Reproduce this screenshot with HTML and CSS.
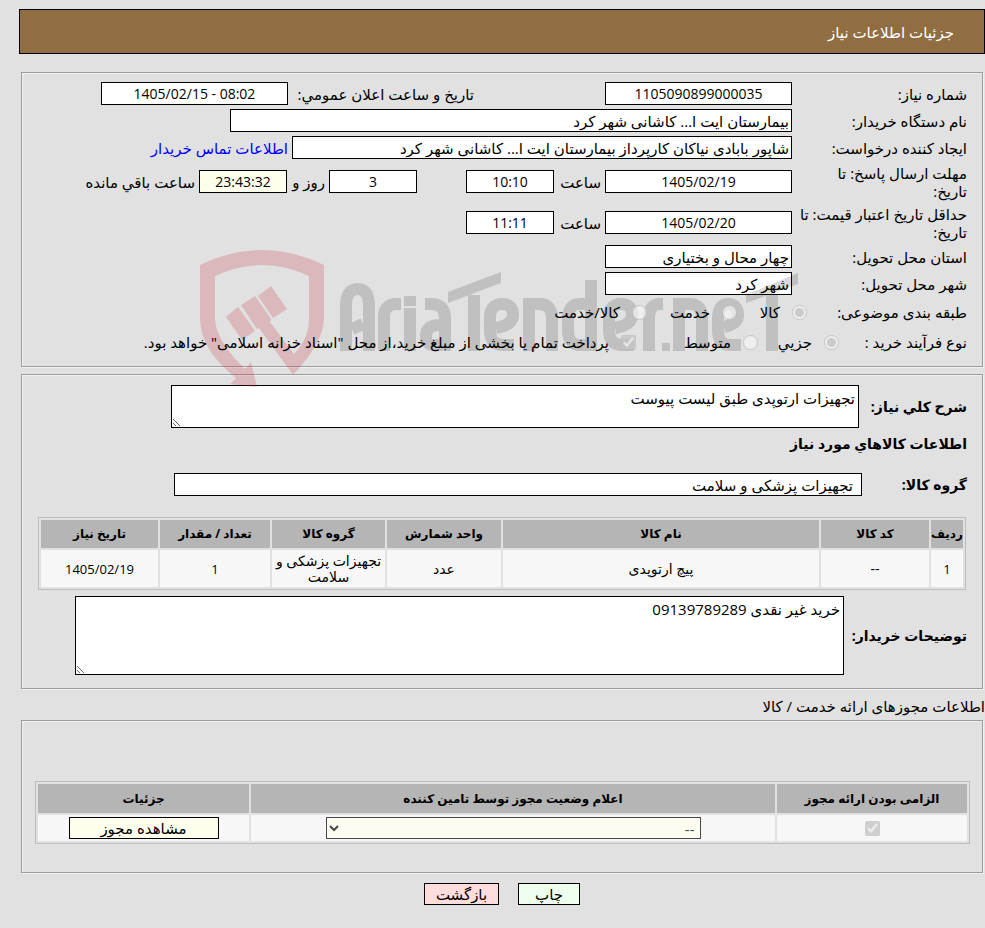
FILE: index.html
```html
<!DOCTYPE html>
<html lang="fa" dir="rtl">
<head>
    <meta charset="UTF-8">
    <meta name="viewport" content="width=device-width, initial-scale=1.0">
    <title>جزئیات اطلاعات نیاز</title>
    <link rel="stylesheet" href="styles.css">
</head>
<body>
    <header class="page-header">
        <h1>جزئیات اطلاعات نیاز</h1>
    </header>

    <main>
        <section class="panel need-info">
            <svg class="watermark" viewBox="0 0 600 140" aria-hidden="true">
                <g fill="#c8283c" fill-opacity="0.22">
                    <path d="M0 15 Q62 -15 124 15 V68 Q124 92 93 125 L59 78 L57 79 L41 55 L55 46 L71 69 L70 72 L94 104 Q109 88 109 70 V26 Q62 4 15 26 V70 Q17 92 45 119 L51 112 L57 137 L30 134 L36 128 Q0 100 0 68 Z"/>
                    <path d="M26 67 L38 57 L55 81 L42 90 Z M58 46 L71 36 L87 59 L73 68 Z"/>
                </g>
                <g fill="none" stroke="#000" stroke-width="12" opacity="0.14">
                    <path d="M146 101 V56 Q146 39 158 39 Q169 39 169 56 V101 M152 79 L163 74"/>
                    <path d="M184 101 V67 Q184 54 197 54 H201"/>
                    <path d="M210 56 V46 M210 58 V101"/>
                    <path d="M225 54 H231 Q245 54 245 68 V95 H234 Q226 95 226 86 Q226 75 240 75"/>
                    <path d="M274 45 V101"/>
                    <path d="M314 95 H303 Q290 95 290 80 V68 Q290 54 302 54 Q313 54 313 65 Q313 75 296 78"/>
                    <path d="M329 101 V54 H339 Q352 54 352 68 V101"/>
                    <path d="M391 30 V95 H380 Q368 95 368 80 V69 Q368 54 380 54 H385"/>
                    <path d="M434 95 H422 Q409 95 409 80 V68 Q409 54 421 54 Q432 54 432 65 Q432 75 415 78"/>
                    <path d="M449 101 V68 Q449 54 460 54 H463"/>
                    <path d="M479 101 V54 H490 Q502 54 502 68 V101"/>
                    <path d="M541 95 H530 Q518 95 518 80 V69 Q518 54 528 54 Q538 54 538 65 Q538 74 524 77"/>
                    <path d="M572 45 V101"/>
                    <path d="M248 42 L301 22 V33 L248 53 Z M546 45 L598 23 V34 L546 53 Z M462 93 H470 V101 H462 Z" fill="#000" stroke="none"/>
                </g>
            </svg>

            <div class="row">
                <label class="caption" for="need-no">شماره نیاز:</label>
                <input class="field medium number" id="need-no" type="text" value="1105090899000035" readonly>
                <label class="announce" for="announce-date">تاریخ و ساعت اعلان عمومي:</label>
                <input class="field medium number" id="announce-date" type="text" dir="ltr" value="1405/02/15 - 08:02" readonly>
            </div>
            <div class="row">
                <label class="caption" for="buyer-org">نام دستگاه خریدار:</label>
                <input class="field wide" id="buyer-org" type="text" value="بیمارستان ایت ا... کاشانی شهر کرد" readonly>
            </div>
            <div class="row">
                <label class="caption" for="requester">ایجاد کننده درخواست:</label>
                <input class="field long" id="requester" type="text" value="شاپور بابادی نیاکان کارپرداز بیمارستان ایت ا... کاشانی شهر کرد" readonly>
                <a href="#">اطلاعات تماس خریدار</a>
            </div>
            <div class="row tall">
                <label class="caption" for="reply-date">مهلت ارسال پاسخ: تا<br>تاریخ:</label>
                <input class="field medium number" id="reply-date" type="text" value="1405/02/19" readonly>
                <label class="hour" for="reply-time">ساعت</label>
                <input class="field small number" id="reply-time" type="text" value="10:10" readonly>
                <input class="field small number days" id="days" type="text" value="3" readonly>
                <label class="days-label" for="days">روز و</label>
                <input class="field small number highlight" id="remain" type="text" value="23:43:32" readonly>
                <label for="remain">ساعت باقي مانده</label>
            </div>
            <div class="row tall">
                <label class="caption" for="price-date">حداقل تاریخ اعتبار قیمت: تا<br>تاریخ:</label>
                <input class="field medium number" id="price-date" type="text" value="1405/02/20" readonly>
                <label class="hour" for="price-time">ساعت</label>
                <input class="field small number" id="price-time" type="text" value="11:11" readonly>
            </div>
            <div class="row">
                <label class="caption" for="province">استان محل تحویل:</label>
                <input class="field medium" id="province" type="text" value="چهار محال و بختیاری" readonly>
            </div>
            <div class="row">
                <label class="caption" for="city">شهر محل تحویل:</label>
                <input class="field medium" id="city" type="text" value="شهر کرد" readonly>
            </div>
            <div class="row choices">
                <span class="caption subject">طبقه بندی موضوعی:</span>
                <label class="choice goods"><input type="radio" name="subject" checked disabled>کالا</label>
                <label class="choice service"><input type="radio" name="subject" disabled>خدمت</label>
                <label class="choice"><input type="radio" name="subject" disabled>کالا/خدمت</label>
            </div>
            <div class="row choices">
                <span class="caption process">نوع فرآیند خرید :</span>
                <label class="choice minor"><input type="radio" name="process" checked disabled>جزیي</label>
                <label class="choice average"><input type="radio" name="process" disabled>متوسط</label>
                <label class="choice"><input type="checkbox" checked disabled>پرداخت تمام یا بخشی از مبلغ خرید،از محل "اسناد خزانه اسلامی" خواهد بود.</label>
            </div>
        </section>

        <section class="panel goods-info">
            <div class="line">
                <label class="bold description-label" for="description">شرح کلي نیاز:</label>
                <textarea class="field description" id="description" readonly>تجهیزات ارتوپدی طبق لیست پیوست</textarea>
            </div>
            <h2>اطلاعات کالاهاي مورد نیاز</h2>
            <div class="line">
                <label class="bold group-label" for="goods-group">گروه کالا:</label>
                <input class="field goods-group" id="goods-group" type="text" value="تجهیزات پزشکی و سلامت" readonly>
            </div>
            <table class="grid goods-table">
                <thead>
                    <tr>
                        <th class="col-row">ردیف</th>
                        <th class="col-code">کد کالا</th>
                        <th>نام کالا</th>
                        <th class="col-unit">واحد شمارش</th>
                        <th class="col-group">گروه کالا</th>
                        <th class="col-count">تعداد / مقدار</th>
                        <th class="col-date">تاریخ نیاز</th>
                    </tr>
                </thead>
                <tbody>
                    <tr>
                        <td class="digits">1</td>
                        <td>--</td>
                        <td>پیچ ارتوپدی</td>
                        <td>عدد</td>
                        <td>تجهیزات پزشکی و سلامت</td>
                        <td class="digits">1</td>
                        <td class="digits">1405/02/19</td>
                    </tr>
                </tbody>
            </table>
            <div class="line">
                <label class="bold notes-label" for="notes">توضیحات خریدار:</label>
                <textarea class="field notes" id="notes" readonly>خرید غیر نقدی 09139789289</textarea>
            </div>
        </section>

        <p class="permit-title">اطلاعات مجوزهای ارائه خدمت / کالا</p>

        <section class="panel permits">
            <table class="grid permit-table">
                <thead>
                    <tr>
                        <th class="col-required">الزامی بودن ارائه مجوز</th>
                        <th>اعلام وضعیت مجوز توسط تامین کننده</th>
                        <th class="col-details">جزئیات</th>
                    </tr>
                </thead>
                <tbody>
                    <tr>
                        <td><input type="checkbox" aria-label="الزامی بودن ارائه مجوز" checked disabled></td>
                        <td>
                            <select class="status" aria-label="اعلام وضعیت مجوز توسط تامین کننده" disabled>
                                <option>--</option>
                            </select>
                        </td>
                        <td><button class="btn view" type="button">مشاهده مجوز</button></td>
                    </tr>
                </tbody>
            </table>
        </section>

        <div class="actions">
            <button class="btn print" type="button">چاپ</button>
            <button class="btn back" type="button">بازگشت</button>
        </div>
    </main>
</body>
</html>
```
FILE: styles.css
```css
* {
    box-sizing: border-box;
}
body {
    font-family: Tahoma, "Open Sans", "DejaVu Sans", sans-serif;
    font-size: 15px;
    line-height: 18px;
    color: #000;
    background-color: #e1e1e1;
    margin: 0;
    padding: 9px 0 20px 19px;
}
input, textarea, select, button {
    font-family: inherit;
    font-size: 15px;
    color: #000;
    margin: 0;
}
.page-header {
    height: 45px;
    padding: 0 30px;
    display: flex;
    align-items: center;
    border: 1px solid #000;
    background-color: #906e41;
}
.page-header h1 {
    margin: 0;
    font-size: 15px;
    font-weight: normal;
    color: #fff;
}
main {
    padding-left: 2px;
}
.panel {
    position: relative;
    margin-right: 2px;
    border: 1px solid #9d9d9d;
    box-shadow: 1px 1px 0 #f0f0f0, inset 1px 1px 0 #f0f0f0;
    padding: 0 15px;
}
.need-info {
    margin-top: 18px;
    padding-top: 7px;
    min-height: 295px;
}
.watermark {
    position: absolute;
    left: 178px;
    top: 177px;
    width: 600px;
    height: 140px;
    z-index: 2;
    pointer-events: none;
}
.row {
    display: flex;
    align-items: center;
    gap: 4px;
    min-height: 27px;
}
.tall {
    min-height: 41px;
}
.caption {
    width: 171px;
    flex-shrink: 0;
    white-space: nowrap;
}
.field {
    height: 23px;
    padding: 1px 2px;
    border: 1px solid #000;
    border-radius: 0;
    background-color: #fff;
    outline: none;
}
.medium {
    width: 187px;
}
.small {
    width: 88px;
}
.wide {
    width: 562px;
}
.long {
    width: 500px;
}
.number {
    text-align: center;
    font-size: 14px;
}
.highlight {
    background-color: #ffffee;
}
.announce {
    margin-right: 127px;
    width: 182px;
    white-space: nowrap;
}
.hour {
    width: 43px;
}
.days {
    margin-right: 45px;
}
.days-label {
    width: 34px;
    white-space: nowrap;
}
a {
    color: #0000ff;
    text-decoration: none;
}
.choices {
    position: relative;
    z-index: 3;
    min-height: 30px;
    gap: 0;
}
.subject {
    width: 160px;
}
.process {
    width: 128px;
}
.choice {
    display: flex;
    align-items: center;
    gap: 12px;
    white-space: nowrap;
}
.choice input {
    width: 15px;
    height: 15px;
}
.goods {
    width: 70px;
}
.service {
    width: 90px;
}
.minor {
    width: 81px;
}
.average {
    width: 122px;
}
.goods-info {
    margin-top: 7px;
    padding-top: 10px;
    min-height: 315px;
}
.line {
    display: flex;
    align-items: center;
    gap: 5px;
}
.bold, h2 {
    font-size: 14px;
    font-weight: bold;
    white-space: nowrap;
}
h2 {
    margin: 7px 0 20px;
}
textarea.field {
    line-height: 18px;
    padding: 3px;
    resize: both;
}
.description-label {
    width: 103px;
}
.description {
    width: 688px;
    height: 43px;
}
.group-label {
    width: 100px;
}
.goods-group {
    width: 688px;
    padding-right: 8px;
}
.grid {
    border: 1px solid #bdbdbd;
    border-spacing: 2px;
    table-layout: fixed;
    text-align: center;
}
.grid th {
    height: 28px;
    padding: 0;
    font-size: 12px;
    background-color: #b5b5b5;
}
.grid td {
    padding: 0 2px;
    font-size: 14px;
    line-height: 16px;
    background-color: #f7f7f7;
}
.grid .digits {
    font-size: 13px;
}
.goods-table {
    width: calc(100% - 2px);
    margin: 21px 1px 6px;
}
.goods-table td {
    height: 37px;
}
.col-row {
    width: 32px;
}
.col-code {
    width: 108px;
}
.col-unit {
    width: 114px;
}
.col-group {
    width: 113px;
}
.col-count {
    width: 110px;
}
.col-date {
    width: 117px;
}
.notes-label {
    width: 118px;
}
.notes {
    width: 769px;
    height: 79px;
}
.permit-title {
    margin: 8px 0 5px;
}
.permits {
    padding: 60px 12px 0 13px;
    min-height: 153px;
}
.permit-table {
    width: 100%;
}
.permit-table th {
    height: 29px;
}
.col-required {
    width: 190px;
}
.col-details {
    width: 211px;
}
.permit-table td {
    height: 26px;
}
.permit-table td input {
    display: block;
    width: 15px;
    height: 15px;
    margin: 0 auto;
}
.status {
    display: block;
    width: 375px;
    height: 22px;
    margin: 0 auto;
    padding: 0 1px;
    border: 1px solid #000;
    border-radius: 0;
    background-color: #ffffee;
    opacity: 0.7;
}
.btn {
    height: 22px;
    padding: 0;
    border: 1px solid #000;
    background-color: #ffffee;
}
.view {
    display: block;
    width: 150px;
    margin: 0 auto;
}
.actions {
    display: flex;
    justify-content: center;
    gap: 19px;
    margin: 10px 2px 0 0;
}
.print {
    width: 62px;
    background-color: #eeffee;
}
.back {
    width: 75px;
    background-color: #ffdddd;
}
```
